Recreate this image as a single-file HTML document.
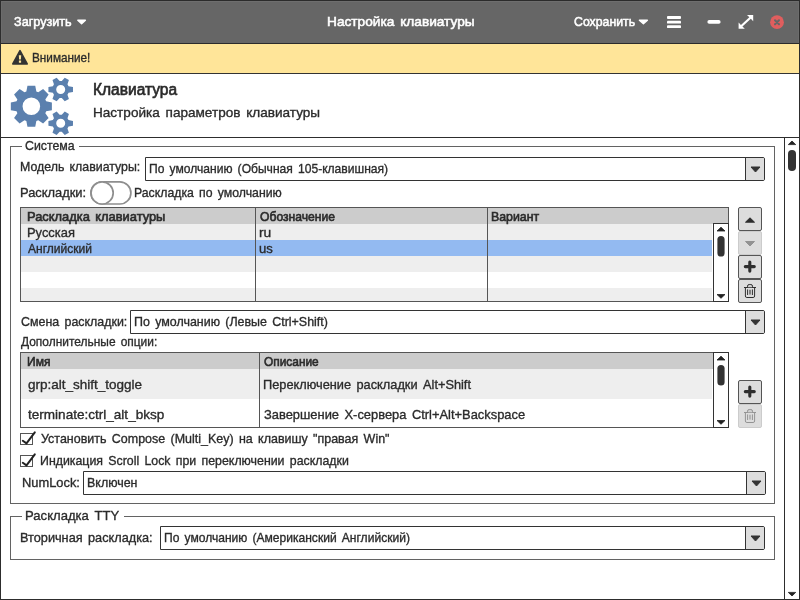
<!DOCTYPE html>
<html lang="ru"><head><meta charset="utf-8"><title>Настройка клавиатуры</title>
<style>
html,body{margin:0;padding:0;width:800px;height:600px;overflow:hidden;background:#fff;}
body{font-family:"Liberation Sans","DejaVu Sans",sans-serif;font-size:13.5px;color:#2b2b2b;position:relative;}
.a{position:absolute;}
.t{position:absolute;white-space:nowrap;word-spacing:2px;line-height:16px;height:16px;transform-origin:0 0;}
.k{background:#2d2d2d;}
.g{background:#555;}
.combo{box-sizing:border-box;border:1px solid #333;background:#fff;border-radius:0 2px 2px 0;height:24px;}
.combo i{position:absolute;right:0;top:0;bottom:0;width:18px;background:#ddd;border-left:1px solid #333;border-radius:0 1px 1px 0;}
.combo svg{position:absolute;right:3px;top:8px;}
.btn{box-sizing:border-box;border:1px solid #555;background:#ddd;border-radius:2px;width:24px;height:24px;}
.btn.dis{border-color:#ccc;}
.btn svg{position:absolute;left:0;top:0;}
.sb{box-sizing:border-box;border:1px solid #333;background:#fff;width:16px;}
#tx{position:absolute;left:0;top:0;width:800px;height:600px;will-change:transform;}

</style></head><body>
<div class="a" style="left:0;top:0;width:800px;height:44px;background:#666;box-sizing:border-box;border-top:1px solid #2b2b2b;border-bottom:1px solid #2b2b2b"></div>
<div class="a" style="left:1px;top:1px;width:798px;height:1px;background:#6e6e6e"></div>
<div class="a" style="left:1px;top:1px;width:1px;height:42px;background:#6c6c6c"></div>
<div class="a" style="left:798px;top:1px;width:1px;height:42px;background:#6c6c6c"></div>
<div class="a" style="left:0;top:44px;width:800px;height:30px;background:#ffe599;box-sizing:border-box;border-bottom:1px solid #333"></div>
<div class="a k" style="left:0;top:137px;width:800px;height:1px"></div>
<div class="a k" style="left:0;top:0;width:1px;height:600px"></div>
<div class="a k" style="left:799px;top:0;width:1px;height:600px"></div>
<div class="a k" style="left:0;top:599px;width:800px;height:1px"></div>
<svg class="a" style="left:0;top:0" width="800" height="44" viewBox="0 0 800 44"><g fill="#fff" stroke="#fff" stroke-linejoin="round" stroke-width="1.4"><path d="M77.8,20.2 L85.4,20.2 L81.6,23.8 Z"/><path d="M639.4,20.2 L647.4,20.2 L643.4,23.8 Z"/></g><g stroke="#fff" stroke-width="2.7" stroke-linecap="round"><path d="M709.2,21.9 H718.8" stroke-width="3.6"/></g><g fill="#fff"><rect x="667" y="16.1" width="14" height="2.9" rx="0.9"/><rect x="667" y="20.7" width="14" height="2.9" rx="0.9"/><rect x="667" y="25.2" width="14" height="2.9" rx="0.9"/></g><path fill="#fff" d="M747,15 L753.2,15 L753.2,21.2 L750.85,18.85 L742.45,26.45 L744.8,28.8 L738.6,28.8 L738.6,22.6 L740.95,24.95 L749.35,17.35 Z"/><circle cx="777" cy="22.2" r="6.9" fill="#e05e5e"/><path d="M775,20.2 L779,24.2 M779,20.2 L775,24.2" stroke="#666" stroke-width="2" stroke-linecap="round"/></svg>
<svg class="a" style="left:10px;top:48px" width="20" height="20" viewBox="10 48 20 20"><path d="M20,50.6 L27.2,64 L12.8,64 Z" fill="#333" stroke="#333" stroke-width="1.6" stroke-linejoin="round"/><path d="M18.8,55.2 h2.4 l-0.3,4.3 h-1.8 Z M18.9,60.5 h2.2 v2.2 h-2.2 Z" fill="#ffe599"/></svg>
<svg class="a" style="left:0;top:74px" width="90" height="64" viewBox="0 74 90 64"><path fill="#5b80ae" fill-rule="evenodd" d="M46.13,101.30 L51.88,102.40 L51.88,110.20 L46.13,111.30 L45.33,113.21 L48.63,118.06 L43.11,123.58 L38.26,120.28 L36.35,121.08 L35.25,126.83 L27.45,126.83 L26.35,121.08 L24.44,120.28 L19.59,123.58 L14.07,118.06 L17.37,113.21 L16.57,111.30 L10.82,110.20 L10.82,102.40 L16.57,101.30 L17.37,99.39 L14.07,94.54 L19.59,89.02 L24.44,92.32 L26.35,91.52 L27.45,85.77 L35.25,85.77 L36.35,91.52 L38.26,92.32 L43.11,89.02 L48.63,94.54 L45.33,99.39ZM22.55,106.30a8.8,8.8 0 1,0 17.6,0a8.8,8.8 0 1,0 -17.6,0ZM68.53,86.20 L72.97,87.10 L72.97,91.90 L68.53,92.80 L67.47,94.63 L68.91,98.92 L64.76,101.32 L61.76,97.93 L59.64,97.93 L56.64,101.32 L52.49,98.92 L53.93,94.63 L52.87,92.80 L48.43,91.90 L48.43,87.10 L52.87,86.20 L53.93,84.37 L52.49,80.08 L56.64,77.68 L59.64,81.07 L61.76,81.07 L64.76,77.68 L68.91,80.08 L67.47,84.37ZM56.20,89.50a4.5,4.5 0 1,0 9.0,0a4.5,4.5 0 1,0 -9.0,0ZM68.53,120.00 L72.97,120.90 L72.97,125.70 L68.53,126.60 L67.47,128.43 L68.91,132.72 L64.76,135.12 L61.76,131.73 L59.64,131.73 L56.64,135.12 L52.49,132.72 L53.93,128.43 L52.87,126.60 L48.43,125.70 L48.43,120.90 L52.87,120.00 L53.93,118.17 L52.49,113.88 L56.64,111.48 L59.64,114.87 L61.76,114.87 L64.76,111.48 L68.91,113.88 L67.47,118.17ZM56.20,123.30a4.5,4.5 0 1,0 9.0,0a4.5,4.5 0 1,0 -9.0,0Z"/></svg>
<div class="a k" style="left:784px;top:138px;width:1px;height:462px"></div>
<svg class="a" style="left:785px;top:138px" width="14" height="461" viewBox="785 138 14 461"><path d="M788.3,144.6 L795.7,144.6 L792,141 Z M788.3,592.4 L795.7,592.4 L792,596 Z" fill="#222" stroke="#222" stroke-width="0.8" stroke-linejoin="round"/><rect x="788" y="150" width="8" height="21" rx="4" fill="#333"/></svg>
<div class="a" style="left:10px;top:146px;width:765px;height:358px;box-sizing:border-box;border:1px solid #636363"></div>
<div class="a" style="left:22px;top:146px;width:57px;height:1px;background:#fff"></div>
<div class="a" style="left:10px;top:516px;width:765px;height:44px;box-sizing:border-box;border:1px solid #636363"></div>
<div class="a" style="left:22px;top:516px;width:102px;height:1px;background:#fff"></div>
<div class="a combo" style="left:145px;top:157px;width:620px"><i></i><svg width="11" height="7" viewBox="0 0 11 7"><path d="M1,1 L10,1 L5.5,6 Z" fill="#333" stroke="#333" stroke-width="1" stroke-linejoin="round"/></svg></div>
<div class="a combo" style="left:130px;top:310px;width:635px"><i></i><svg width="11" height="7" viewBox="0 0 11 7"><path d="M1,1 L10,1 L5.5,6 Z" fill="#333" stroke="#333" stroke-width="1" stroke-linejoin="round"/></svg></div>
<div class="a combo" style="left:83px;top:471px;width:683px"><i></i><svg width="11" height="7" viewBox="0 0 11 7"><path d="M1,1 L10,1 L5.5,6 Z" fill="#333" stroke="#333" stroke-width="1" stroke-linejoin="round"/></svg></div>
<div class="a combo" style="left:160px;top:526px;width:605px"><i></i><svg width="11" height="7" viewBox="0 0 11 7"><path d="M1,1 L10,1 L5.5,6 Z" fill="#333" stroke="#333" stroke-width="1" stroke-linejoin="round"/></svg></div>
<svg class="a" style="left:88px;top:179px" width="46" height="28" viewBox="88 179 46 28"><rect x="91" y="181.8" width="39.9" height="22.2" rx="11.1" fill="#fff" stroke="#8e8e8e" stroke-width="1.7"/><circle cx="102.1" cy="192.9" r="11.1" fill="#fff" stroke="#8e8e8e" stroke-width="1.7"/></svg>
<div class="a" style="left:20px;top:207px;width:709px;height:95px;box-sizing:border-box;border:1px solid #555;background:#fff"></div>
<div class="a" style="left:21px;top:208px;width:707px;height:16px;background:#ccc"></div>
<div class="a" style="left:21px;top:224px;width:691px;height:16px;background:#eee"></div>
<div class="a" style="left:21px;top:240px;width:691px;height:16px;background:#93baf1"></div>
<div class="a" style="left:21px;top:256px;width:691px;height:16px;background:#eee"></div>
<div class="a" style="left:21px;top:288px;width:691px;height:13px;background:#eee"></div>
<div class="a g" style="left:255px;top:208px;width:1px;height:93px"></div>
<div class="a g" style="left:487px;top:208px;width:1px;height:93px"></div>
<div class="a sb" style="left:713px;top:223px;height:79px"></div><svg class="a" style="left:713px;top:223px" width="16" height="79" viewBox="0 0 16 79"><path d="M4,8 L12,8 L8,4.2 Z M4,71.5 L12,71.5 L8,75.3 Z" fill="#222" stroke="#222" stroke-width="0.8" stroke-linejoin="round"/><rect x="4.4" y="13" width="7.2" height="20.6" rx="3.6" fill="#333"/></svg>
<div class="a btn" style="left:738px;top:207px"><svg width="24" height="24" viewBox="0 0 24 24" style="left:-1px;top:-1px"><path d="M7.5,15.2 L16.5,15.2 L12,10.8 Z" fill="#2e2e2e" stroke="#2e2e2e" stroke-width="1" stroke-linejoin="round"/></svg></div>
<div class="a btn dis" style="left:738px;top:231px"><svg width="24" height="24" viewBox="0 0 24 24" style="left:-1px;top:-1px"><path d="M7.5,10.5 L16.5,10.5 L12,15 Z" fill="#939393" stroke="#939393" stroke-width="1" stroke-linejoin="round"/></svg></div>
<div class="a btn" style="left:738px;top:255px"><svg width="24" height="24" viewBox="0 0 24 24" style="left:-1px;top:-1px"><path d="M7.3,11.6 H16.3 M11.8,7.1 V16.1" stroke="#2e2e2e" stroke-width="3.1" stroke-linecap="round" fill="none"/></svg></div>
<div class="a btn" style="left:738px;top:279px"><svg width="24" height="24" viewBox="0 0 24 24" style="left:-1px;top:-1px"><g fill="none" stroke="#2e2e2e" stroke-width="1" stroke-linecap="round" stroke-linejoin="round"><path d="M6.4,8.5 H17.6"/><path d="M9.5,8.3 V7.2 Q9.5,5.5 11.2,5.5 H12.8 Q14.5,5.5 14.5,7.2 V8.3" fill="#cfcfcf"/><path d="M7.4,8.7 V17 Q7.4,18.5 8.9,18.5 H15.1 Q16.6,18.5 16.6,17 V8.7"/><path d="M9.6,10.8 V15.6 M14.4,10.8 V15.6"/><path d="M12,10.8 V15.6" stroke-width="1.8" stroke-opacity="0.6" stroke-linecap="butt"/></g></svg></div>
<div class="a" style="left:20px;top:352px;width:709px;height:76px;box-sizing:border-box;border:1px solid #555;background:#fff"></div>
<div class="a" style="left:21px;top:353px;width:692px;height:16px;background:#ccc"></div>
<div class="a" style="left:21px;top:369px;width:691px;height:30px;background:#eee"></div>
<div class="a g" style="left:259px;top:353px;width:1px;height:74px"></div>
<div class="a sb" style="left:713px;top:352px;height:76px"></div><svg class="a" style="left:713px;top:352px" width="16" height="76" viewBox="0 0 16 76"><path d="M4,8 L12,8 L8,4.2 Z M4,68.5 L12,68.5 L8,72.3 Z" fill="#222" stroke="#222" stroke-width="0.8" stroke-linejoin="round"/><rect x="4.4" y="13" width="7.2" height="20.6" rx="3.6" fill="#333"/></svg>
<div class="a btn" style="left:738px;top:380px"><svg width="24" height="24" viewBox="0 0 24 24" style="left:-1px;top:-1px"><path d="M7.3,11.6 H16.3 M11.8,7.1 V16.1" stroke="#2e2e2e" stroke-width="3.1" stroke-linecap="round" fill="none"/></svg></div>
<div class="a btn dis" style="left:738px;top:404px"><svg width="24" height="24" viewBox="0 0 24 24" style="left:-1px;top:-1px"><g fill="none" stroke="#939393" stroke-width="1" stroke-linecap="round" stroke-linejoin="round"><path d="M6.4,8.5 H17.6"/><path d="M9.5,8.3 V7.2 Q9.5,5.5 11.2,5.5 H12.8 Q14.5,5.5 14.5,7.2 V8.3" fill="#cfcfcf"/><path d="M7.4,8.7 V17 Q7.4,18.5 8.9,18.5 H15.1 Q16.6,18.5 16.6,17 V8.7"/><path d="M9.6,10.8 V15.6 M14.4,10.8 V15.6"/><path d="M12,10.8 V15.6" stroke-width="1.8" stroke-opacity="0.6" stroke-linecap="butt"/></g></svg></div>
<div class="a" style="left:20px;top:433px;width:13px;height:12px;box-sizing:border-box;border:1px solid #555;background:#fff"></div><svg class="a" style="left:18px;top:429px" width="20" height="18" viewBox="0 0 20 18"><path d="M4.8,11.8 L8.5,14.4 L16.8,3.4" fill="none" stroke="#222" stroke-width="2" stroke-linecap="round" stroke-linejoin="round"/></svg>
<div class="a" style="left:20px;top:455px;width:13px;height:12px;box-sizing:border-box;border:1px solid #555;background:#fff"></div><svg class="a" style="left:18px;top:451px" width="20" height="18" viewBox="0 0 20 18"><path d="M4.8,11.8 L8.5,14.4 L16.8,3.4" fill="none" stroke="#222" stroke-width="2" stroke-linecap="round" stroke-linejoin="round"/></svg>
<div id="tx">
<div class="t" style="left:14.00px;top:14px;font-size:13.5px;transform:scaleX(0.9360);color:#ffffff;-webkit-text-stroke:0.55px #ffffff;">Загрузить</div>
<div class="t" style="left:326.65px;top:14px;font-size:13.5px;transform:scaleX(1.0133);color:#ffffff;-webkit-text-stroke:0.55px #ffffff;">Настройка клавиатуры</div>
<div class="t" style="left:574.00px;top:14px;font-size:13.5px;transform:scaleX(0.9104);color:#ffffff;-webkit-text-stroke:0.55px #ffffff;">Сохранить</div>
<div class="t" style="left:31.94px;top:50px;font-size:13.5px;transform:scaleX(0.8698);color:#2b2b2b;-webkit-text-stroke:0.35px #2b2b2b;">Внимание!</div>
<div class="t" style="left:92.64px;top:82px;font-size:16px;transform:scaleX(0.9697);color:#2b2b2b;-webkit-text-stroke:0.65px #2b2b2b;">Клавиатура</div>
<div class="t" style="left:93.20px;top:105px;font-size:13.5px;transform:scaleX(1.0047);color:#2b2b2b;-webkit-text-stroke:0.35px #2b2b2b;">Настройка параметров клавиатуры</div>
<div class="t" style="left:24.88px;top:138px;font-size:13.5px;transform:scaleX(0.9138);color:#2b2b2b;-webkit-text-stroke:0.35px #2b2b2b;">Система</div>
<div class="t" style="left:19.94px;top:159px;font-size:13.5px;transform:scaleX(0.9147);color:#2b2b2b;-webkit-text-stroke:0.35px #2b2b2b;">Модель клавиатуры:</div>
<div class="t" style="left:149.11px;top:161px;font-size:13.5px;transform:scaleX(0.8946);color:#2b2b2b;-webkit-text-stroke:0.35px #2b2b2b;">По умолчанию (Обычная 105-клавишная)</div>
<div class="t" style="left:19.85px;top:185px;font-size:13.5px;transform:scaleX(0.9540);color:#2b2b2b;-webkit-text-stroke:0.35px #2b2b2b;">Раскладки:</div>
<div class="t" style="left:134.05px;top:185px;font-size:13.5px;transform:scaleX(0.9090);color:#2b2b2b;-webkit-text-stroke:0.35px #2b2b2b;">Раскладка по умолчанию</div>
<div class="t" style="left:27.22px;top:209px;font-size:13.5px;transform:scaleX(0.9536);color:#2b2b2b;-webkit-text-stroke:0.65px #2b2b2b;">Раскладка клавиатуры</div>
<div class="t" style="left:260.12px;top:209px;font-size:13.5px;transform:scaleX(0.8989);color:#2b2b2b;-webkit-text-stroke:0.65px #2b2b2b;">Обозначение</div>
<div class="t" style="left:491.28px;top:209px;font-size:13.5px;transform:scaleX(0.9137);color:#2b2b2b;-webkit-text-stroke:0.65px #2b2b2b;">Вариант</div>
<div class="t" style="left:26.81px;top:225px;font-size:13.5px;transform:scaleX(0.9562);color:#2b2b2b;-webkit-text-stroke:0.35px #2b2b2b;">Русская</div>
<div class="t" style="left:258.99px;top:225px;font-size:13.5px;transform:scaleX(1.0227);color:#2b2b2b;-webkit-text-stroke:0.35px #2b2b2b;">ru</div>
<div class="t" style="left:27.78px;top:241px;font-size:13.5px;transform:scaleX(0.8925);color:#2b2b2b;-webkit-text-stroke:0.35px #2b2b2b;">Английский</div>
<div class="t" style="left:258.81px;top:241px;font-size:13.5px;transform:scaleX(0.9697);color:#2b2b2b;-webkit-text-stroke:0.35px #2b2b2b;">us</div>
<div class="t" style="left:20.54px;top:314px;font-size:13.5px;transform:scaleX(0.9202);color:#2b2b2b;-webkit-text-stroke:0.35px #2b2b2b;">Смена раскладки:</div>
<div class="t" style="left:134.31px;top:314px;font-size:13.5px;transform:scaleX(0.9214);color:#2b2b2b;-webkit-text-stroke:0.35px #2b2b2b;">По умолчанию (Левые Ctrl+Shift)</div>
<div class="t" style="left:20.68px;top:334px;font-size:13.5px;transform:scaleX(0.8850);color:#2b2b2b;-webkit-text-stroke:0.35px #2b2b2b;">Дополнительные опции:</div>
<div class="t" style="left:27.05px;top:354px;font-size:13.5px;transform:scaleX(0.8930);color:#2b2b2b;-webkit-text-stroke:0.65px #2b2b2b;">Имя</div>
<div class="t" style="left:264.00px;top:354px;font-size:13.5px;transform:scaleX(0.8806);color:#2b2b2b;-webkit-text-stroke:0.65px #2b2b2b;">Описание</div>
<div class="t" style="left:28.00px;top:377px;font-size:13.5px;transform:scaleX(1.0000);color:#2b2b2b;-webkit-text-stroke:0.35px #2b2b2b;">grp:alt_shift_toggle</div>
<div class="t" style="left:263.41px;top:377px;font-size:13.5px;transform:scaleX(0.9465);color:#2b2b2b;-webkit-text-stroke:0.35px #2b2b2b;">Переключение раскладки Alt+Shift</div>
<div class="t" style="left:27.65px;top:407px;font-size:13.5px;transform:scaleX(1.0035);color:#2b2b2b;-webkit-text-stroke:0.35px #2b2b2b;">terminate:ctrl_alt_bksp</div>
<div class="t" style="left:263.51px;top:407px;font-size:13.5px;transform:scaleX(0.9552);color:#2b2b2b;-webkit-text-stroke:0.35px #2b2b2b;">Завершение X-сервера Ctrl+Alt+Backspace</div>
<div class="t" style="left:41.15px;top:431px;font-size:13.5px;transform:scaleX(0.9242);color:#2b2b2b;-webkit-text-stroke:0.35px #2b2b2b;">Установить Compose (Multi_Key) на клавишу &quot;правая Win&quot;</div>
<div class="t" style="left:39.54px;top:453px;font-size:13.5px;transform:scaleX(0.9152);color:#2b2b2b;-webkit-text-stroke:0.35px #2b2b2b;">Индикация Scroll Lock при переключении раскладки</div>
<div class="t" style="left:21.66px;top:475px;font-size:13.5px;transform:scaleX(0.9532);color:#2b2b2b;-webkit-text-stroke:0.35px #2b2b2b;">NumLock:</div>
<div class="t" style="left:87.07px;top:475px;font-size:13.5px;transform:scaleX(0.9213);color:#2b2b2b;-webkit-text-stroke:0.35px #2b2b2b;">Включен</div>
<div class="t" style="left:25.01px;top:508px;font-size:13.5px;transform:scaleX(0.9702);color:#2b2b2b;-webkit-text-stroke:0.35px #2b2b2b;">Раскладка TTY</div>
<div class="t" style="left:20.24px;top:530px;font-size:13.5px;transform:scaleX(0.9422);color:#2b2b2b;-webkit-text-stroke:0.35px #2b2b2b;">Вторичная раскладка:</div>
<div class="t" style="left:164.38px;top:530px;font-size:13.5px;transform:scaleX(0.8932);color:#2b2b2b;-webkit-text-stroke:0.35px #2b2b2b;">По умолчанию (Американский Английский)</div>
</div>
</body></html>
